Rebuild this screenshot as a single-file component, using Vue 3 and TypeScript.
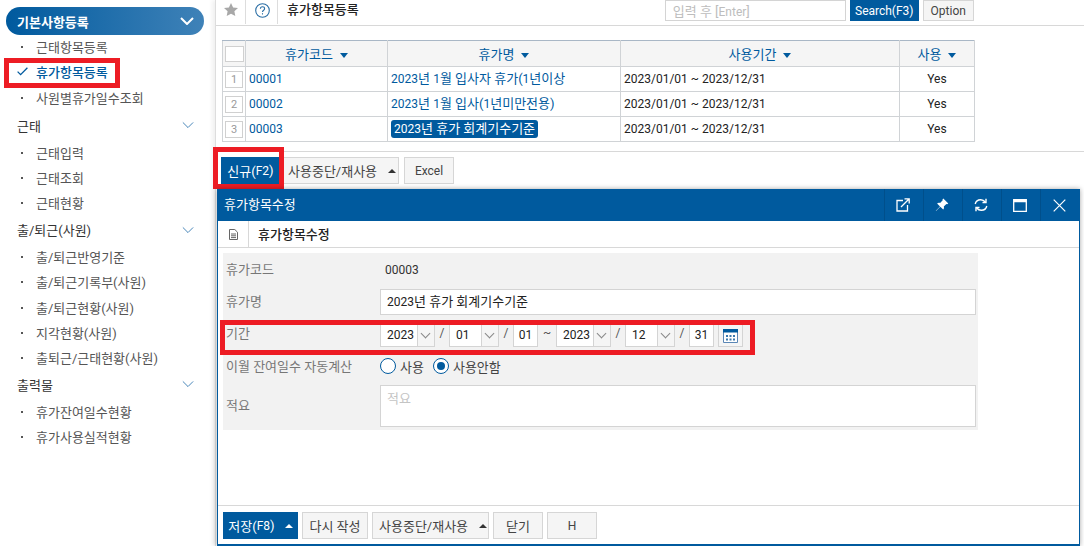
<script setup lang="ts">
import { h } from 'vue'

interface MenuGroup {
  title: string
  active?: boolean
  items: string[]
}

const menu: MenuGroup[] = [
  { title: '기본사항등록', active: true, items: ['근태항목등록', '휴가항목등록', '사원별휴가일수조회'] },
  { title: '근태', items: ['근태입력', '근태조회', '근태현황'] },
  { title: '출/퇴근(사원)', items: ['출/퇴근반영기준', '출/퇴근기록부(사원)', '출/퇴근현황(사원)', '지각현황(사원)', '출퇴근/근태현황(사원)'] },
  { title: '출력물', items: ['휴가잔여일수현황', '휴가사용실적현황'] },
]

const columns = ['휴가코드', '휴가명', '사용기간', '사용']

const rows = [
  { no: 1, code: '00001', name: '2023년 1월 입사자 휴가(1년이상' },
  { no: 2, code: '00002', name: '2023년 1월 입사(1년미만전용)' },
  { no: 3, code: '00003', name: '2023년 휴가 회계기수기준', selected: true },
]

// hangul sits at 13px, digits and latin look right a size smaller
const Txt = (props: { text: string }) =>
  props.text
    .split(/([0-9A-Za-z]+)/)
    .map((part, i) => (i % 2 ? h('span', { class: 'lat' }, part) : part))
</script>

<template>
  <div class="page">
    <aside class="sidebar">
      <section v-for="group in menu" :key="group.title">
        <div class="group-title" :class="{ active: group.active }">
          <Txt :text="group.title" />
          <svg :width="group.active ? 14 : 12" height="8" viewBox="0 0 14 8" fill="none" stroke="currentColor" :stroke-width="group.active ? 2 : 1.1">
            <path d="M1 1l6 6 6-6" />
          </svg>
        </div>
        <div
          v-for="item in group.items"
          :key="item"
          class="menu-item"
          :class="{ current: item === '휴가항목등록' }"
        >
          <svg v-if="item === '휴가항목등록'" class="check" width="11" height="9" viewBox="0 0 11 9" fill="none" stroke="#005a9e" stroke-width="1.3">
            <path d="M.6 4.6l3 3L10.4.8" />
          </svg>
          <i v-else class="dot" />
          <span>{{ item }}</span>
        </div>
      </section>
    </aside>

    <main class="main">
      <header class="topbar">
        <div class="top-cell star">
          <svg width="14" height="13" viewBox="0 0 14 13"><path fill="#a8a8a8" d="M7 0l2.1 4.4 4.9.6-3.6 3.3.9 4.7L7 10.700 2.700 13l.9-4.700L0 5l4.900-.6z" /></svg>
        </div>
        <div class="top-cell help">
          <svg width="15" height="15" viewBox="0 0 15 15" fill="none" stroke="#2a6ea5" stroke-width="1.1">
            <circle cx="7.500" cy="7.500" r="6.800" />
            <path d="M5.400 5.800c0-1.300 1-2 2.100-2s2.100.7 2.100 1.900c0 1.600-2.100 1.500-2.100 3.300" />
            <path d="M7.500 10.200v1.300" />
          </svg>
        </div>
        <strong class="page-title">휴가항목등록</strong>
        <div class="search">
          <div class="search-input"><Txt text="입력 후 [Enter]" /></div>
          <button class="btn primary search-btn lat">Search(F3)</button>
          <button class="btn option-btn lat">Option</button>
        </div>
      </header>

      <div class="table-wrap">
        <table class="grid">
          <colgroup>
            <col style="width: 23px" />
            <col style="width: 142px" />
            <col style="width: 233px" />
            <col style="width: 279px" />
            <col style="width: 75px" />
          </colgroup>
          <thead>
            <tr>
              <th class="no-cell"><span class="no-box" /></th>
              <th v-for="col in columns" :key="col">{{ col }}<i class="sort" /></th>
            </tr>
          </thead>
          <tbody>
            <tr v-for="row in rows" :key="row.no">
              <td class="no-cell"><span class="no-box">{{ row.no }}</span></td>
              <td class="link lat">{{ row.code }}</td>
              <td class="link"><span class="name" :class="{ selected: row.selected }"><Txt :text="row.name" /></span></td>
              <td class="lat">2023/01/01 ~ 2023/12/31</td>
              <td class="center lat">Yes</td>
            </tr>
          </tbody>
        </table>
      </div>

      <div class="list-actions">
        <button class="btn primary new-btn"><Txt text="신규(F2)" /></button>
        <button class="btn plain-drop">사용중단/재사용<i class="up" /></button>
        <button class="btn excel-btn lat">Excel</button>
      </div>
    </main>

    <span class="mark mark-menu" />
    <span class="mark mark-new" />

    <section class="dialog">
      <header class="dialog-head">
        <span class="dialog-title">휴가항목수정</span>
        <div class="dialog-tools">
          <button>
            <svg width="14" height="14" viewBox="0 0 14 14" fill="none" stroke="#fff" stroke-width="1.300">
              <path d="M7 2.500H1v10.500h10.500V7" />
              <path d="M5 9l8-8M8.500 .8h4.700v4.700" />
            </svg>
          </button>
          <button>
            <svg width="14" height="14" viewBox="0 0 14 14" fill="#fff">
              <path d="M8.300 .6l5 5-1.200.7-.7-.3-2.600 2.600c.4 1.300.1 2.300-.6 3L5.300 8.700 1 13 .8 12.800l4.200-4.400L2.100 5.500c.7-.7 1.700-1 3-.6l2.600-2.600-.2-.7z" />
            </svg>
          </button>
          <button>
            <svg width="14" height="14" viewBox="0 0 14 14" fill="none" stroke="#fff" stroke-width="1.400">
              <path d="M1.200 6C1.800 3.400 4 1.700 6.700 1.700c1.900 0 3.500.9 4.600 2.300" />
              <path d="M12.800 8c-.6 2.600-2.800 4.300-5.500 4.300-1.900 0-3.500-.9-4.600-2.300" />
              <path d="M12 .8v3.700H8.500M2 13.200V9.500h3.500" />
            </svg>
          </button>
          <button>
            <svg width="14" height="13" viewBox="0 0 14 13" fill="none" stroke="#fff">
              <path d="M.7.700h12.600v11.600H.7z" stroke-width="1.300" />
              <path d="M.7 2h12.600" stroke-width="2.500" />
            </svg>
          </button>
          <button>
            <svg width="13" height="13" viewBox="0 0 13 13" fill="none" stroke="#fff" stroke-width="1.200">
              <path d="M.7.700l11.600 11.600M12.300.7L.7 12.300" />
            </svg>
          </button>
        </div>
      </header>

      <div class="dialog-sub">
        <div class="sub-icon">
          <svg width="9" height="11" viewBox="0 0 9 11" fill="none" stroke="#666">
            <path d="M.5.500h5.300l2.700 2.700v7.300h-8z" />
            <path d="M2 5h5M2 6.800h5M2 8.600h5" />
          </svg>
        </div>
        <strong>휴가항목수정</strong>
      </div>

      <div class="dialog-body">
        <div class="form">
          <div class="form-row code-row">
            <label>휴가코드</label>
            <span class="value lat">00003</span>
          </div>
          <div class="form-row name-row">
            <label>휴가명</label>
            <div class="field wide"><Txt text="2023년 휴가 회계기수기준" /></div>
          </div>
          <div class="form-row date-row">
            <label>기간</label>
            <div class="date-line lat">
              <div class="combo y"><span>2023</span><i><b /></i></div>
              <em>/</em>
              <div class="combo m"><span>01</span><i><b /></i></div>
              <em>/</em>
              <div class="field day">01</div>
              <em class="tilde">~</em>
              <div class="combo y"><span>2023</span><i><b /></i></div>
              <em>/</em>
              <div class="combo m"><span>12</span><i><b /></i></div>
              <em>/</em>
              <div class="field day">31</div>
              <div class="cal">
                <svg width="15" height="14" viewBox="0 0 15 14">
                  <path fill="#fff" stroke="#5a86b5" d="M.5.500h14v13H.5z" />
                  <path fill="#005a9e" d="M0 0h15v3.500H0z" />
                  <path fill="#3a78ad" d="M3 6h2v2H3zM6.500 6h2v2h-2zM10 6h2v2h-2zM3 9.500h2v2H3zM6.500 9.500h2v2h-2zM10 9.500h2v2h-2z" />
                </svg>
              </div>
            </div>
          </div>
          <div class="form-row radio-row">
            <label>이월 잔여일수 자동계산</label>
            <div class="radios">
              <span class="radio" /><span class="radio-label first">사용</span>
              <span class="radio on" /><span class="radio-label">사용안함</span>
            </div>
          </div>
          <div class="form-row memo-row">
            <label>적요</label>
            <div class="field memo">적요</div>
          </div>
        </div>
      </div>

      <footer class="dialog-foot">
        <div class="split">
          <button class="btn primary save"><Txt text="저장(F8)" /></button>
          <button class="btn primary save-drop"><i class="up white" /></button>
        </div>
        <button class="btn again">다시 작성</button>
        <button class="btn stop">사용중단/재사용<i class="up" /></button>
        <button class="btn close">닫기</button>
        <button class="btn close lat">H</button>
      </footer>

      <span class="mark mark-date" />
    </section>
  </div>
</template>

<style scoped>
.page {
  position: relative;
  display: flex;
  width: 1084px;
  height: 546px;
  overflow: hidden;
  background: #fff;
  color: #222;
  font-family: Roboto, "Noto Sans CJK KR", sans-serif;
  font-size: 13px;
}

.sidebar {
  flex: none;
  width: 213px;
  padding-top: 7px;
  box-sizing: border-box;
  background: #fff;
}

.sidebar section:first-child {
  margin-bottom: 2px;
}

.group-title {
  display: flex;
  align-items: center;
  justify-content: space-between;
  height: 27px;
  margin: 0.5px 9px 1px 6px;
  padding: 0 10px 0 11px;
  color: #333;
}

.group-title svg {
  color: #3f7fb5;
}

.group-title.active {
  height: 28px;
  margin-top: 0;
  margin-bottom: -1px;
  border-radius: 14px;
  background: linear-gradient(90deg, #005a9e, #3f82b8);
  color: #fff;
  font-weight: 700;
}

.group-title.active svg {
  color: #fff;
}

.menu-item {
  position: relative;
  display: flex;
  align-items: center;
  height: 25.25px;
  padding-left: 36px;
  color: #555;
}

.menu-item.current {
  color: #005a9e;
  font-weight: 500;
}

.dot {
  position: absolute;
  left: 21px;
  top: 12px;
  width: 2px;
  height: 2px;
  background: #555;
}

.check {
  position: absolute;
  left: 17px;
  top: 8px;
}

.main {
  flex: 1;
  margin-left: 2px;
  border-left: 1px solid #ddd;
  box-shadow: -3px 0 4px rgba(0, 0, 0, 0.06);
  min-width: 0;
}

.topbar {
  display: flex;
  align-items: stretch;
  height: 25px;
  border-bottom: 1px solid #d8d8d8;
}

.top-cell {
  display: flex;
  align-items: center;
  justify-content: center;
  height: 24px;
  border-right: 1px solid #ddd;
}

.star {
  width: 30px;
  padding-bottom: 5px;
  box-sizing: border-box;
}

.help {
  width: 32px;
  padding: 0 0 3px 1px;
  box-sizing: border-box;
}

.page-title {
  margin-left: 9px;
  line-height: 20px;
  color: #222;
  font-weight: 500;
}

.search {
  display: flex;
  gap: 4px;
  height: 21px;
  margin-left: 306px;
}

.search-input {
  width: 181px;
  box-sizing: border-box;
  height: 21px;
  padding-left: 7px;
  border: 1px solid #d4d4d4;
  color: #bdbdbd;
  line-height: 21px;
}

.btn {
  display: inline-flex;
  align-items: center;
  justify-content: center;
  box-sizing: border-box;
  height: 27px;
  padding: 0;
  border: 1px solid #d6d6d6;
  background: #f5f5f5;
  color: #444;
  font-family: inherit;
  font-size: 13px;
  white-space: nowrap;
}

.btn.lat {
  font-size: 12px;
}

.btn.primary {
  border-color: #005a9e;
  background: #005a9e;
  color: #fff;
}

.search-btn {
  width: 69px;
  height: 21px;
}

.option-btn {
  width: 51px;
  height: 21px;
}

.table-wrap {
  padding: 14px 0 0 6px;
  height: 126px;
  box-sizing: border-box;
  border-bottom: 1px solid #d8d8d8;
}

.grid {
  width: 752px;
  table-layout: fixed;
  border-collapse: collapse;
}

.grid th,
.grid td {
  height: 24px;
  padding: 0;
  border: 1px solid #d0d3d6;
  font-weight: 400;
  overflow: hidden;
  white-space: nowrap;
}

.grid th {
  height: 25px;
  border-top-color: #a9b7c6;
  background: #f5f5f5;
  color: #005a9e;
  text-align: center;
}

.grid td {
  padding-left: 3px;
}

.grid td.center {
  padding: 0;
  text-align: center;
}

.grid td.no-cell {
  padding: 0;
}

.no-cell {
  text-align: center;
}

.no-box {
  display: inline-block;
  width: 18px;
  height: 17px;
  box-sizing: border-box;
  border: 1px solid #d0d0d0;
  background: #fff;
  color: #999;
  font-size: 11px;
  line-height: 15px;
  vertical-align: middle;
}

th .no-box {
  width: 19px;
  height: 16px;
}

.link {
  color: #005a9e;
}

.name {
  display: block;
  width: fit-content;
  line-height: 17px;
}

.selected {
  padding: 0 3px;
  border-radius: 3px;
  background: #005a9e;
  color: #fff;
}

.sort {
  display: inline-block;
  margin-left: 7px;
  border-top: 5px solid #005a9e;
  border-left: 4px solid transparent;
  border-right: 4px solid transparent;
  vertical-align: 1px;
}

.list-actions {
  display: flex;
  padding: 5px 0 0 5px;
}

.new-btn {
  width: 59px;
}

.plain-drop {
  justify-content: flex-start;
  width: 119px;
  padding-left: 8px;
  border-left: 0;
  margin-right: 5px;
}

.excel-btn {
  width: 50px;
}

.up {
  display: inline-block;
  margin-left: 11px;
  border-bottom: 4px solid #333;
  border-left: 4px solid transparent;
  border-right: 4px solid transparent;
}

.up.white {
  margin: 0;
  border-bottom-color: #fff;
}

/* red callouts drawn over the screen */
.mark {
  position: absolute;
  box-sizing: border-box;
  border: 5px solid #ed1c24;
  pointer-events: none;
}

.mark-menu {
  left: 4px;
  top: 58px;
  width: 116px;
  height: 30px;
}

.mark-new {
  left: 213px;
  top: 147px;
  width: 71px;
  height: 42px;
}

.mark-date {
  left: 2px;
  top: 131px;
  width: 535px;
  height: 35px;
}

.dialog {
  position: absolute;
  left: 217px;
  top: 189px;
  display: flex;
  flex-direction: column;
  width: 863px;
  height: 357px;
  box-sizing: border-box;
  border: solid #005a9e;
  border-width: 0 1px 2px;
  background: #fff;
  box-shadow: 0 0 5px rgba(0, 0, 0, 0.35);
}

.dialog-head {
  display: flex;
  align-items: stretch;
  justify-content: space-between;
  flex: none;
  height: 32px;
  background: #005a9e;
  color: #fff;
}

.dialog-title {
  padding-left: 6px;
  line-height: 31px;
}

.dialog-tools {
  display: flex;
}

.dialog-tools button {
  display: flex;
  align-items: center;
  justify-content: center;
  width: 39px;
  padding: 0 2px 0 0;
  border: 0;
  border-left: 1px solid #004f8b;
  background: none;
}

.dialog-sub {
  display: flex;
  align-items: stretch;
  flex: none;
  height: 27px;
  box-sizing: border-box;
  border-bottom: 1px solid #d8d8d8;
}

.sub-icon {
  display: flex;
  align-items: center;
  justify-content: center;
  width: 30px;
  border-right: 1px solid #d8d8d8;
}

.dialog-sub strong {
  margin-left: 9px;
  line-height: 28px;
  font-weight: 500;
}

.dialog-body {
  flex: 1;
  padding: 5px 0 0 5px;
  border-bottom: 1px solid #d8d8d8;
}

.form {
  width: 755px;
  height: 177px;
  background: #f2f2f2;
}

.form-row {
  display: flex;
  align-items: center;
}

.form-row label {
  flex: none;
  width: 157px;
  padding-left: 3px;
  box-sizing: border-box;
  color: #777;
}

.code-row {
  height: 33px;
}

.code-row label {
  margin-bottom: 3px;
}

.value {
  margin-left: 5px;
  color: #333;
}

.name-row {
  height: 32px;
}

.name-row label {
  margin-bottom: 3px;
}

.field {
  box-sizing: border-box;
  border: 1px solid #d4d4d4;
  background: #fff;
  color: #222;
}

.wide {
  width: 596px;
  height: 26px;
  padding-left: 6px;
  line-height: 24px;
}

.date-row {
  height: 33px;
  padding-top: 2px;
  box-sizing: border-box;
}

.date-row label {
  margin-bottom: 7px;
}

.date-line {
  display: flex;
  align-items: center;
  height: 23px;
}

.date-line em {
  width: 14px;
  margin-bottom: 5px;
  color: #555;
  font-style: normal;
  text-align: center;
}

.date-line em.tilde {
  width: 18px;
}

.combo {
  display: flex;
  box-sizing: border-box;
  height: 23px;
  border: 1px solid #d4d4d4;
  background: #fff;
}

.combo span {
  flex: 1;
  padding-left: 6px;
  line-height: 21px;
}

.combo i {
  position: relative;
  flex: none;
  width: 16px;
  border-left: 1px solid #d4d4d4;
  background: #f5f5f5;
}

.combo b {
  position: absolute;
  left: 4px;
  top: 5px;
  width: 6px;
  height: 6px;
  border: solid #888;
  border-width: 0 1px 1px 0;
  transform: rotate(45deg);
}

.combo.y {
  width: 55px;
}

.combo.m {
  width: 50px;
}

.day {
  width: 25px;
  height: 23px;
  line-height: 21px;
  text-align: center;
}

.cal {
  display: flex;
  align-items: center;
  justify-content: center;
  width: 25px;
  height: 23px;
  margin-left: 4px;
  box-sizing: border-box;
  border: 1px solid #d4d4d4;
  background: #f5f5f5;
}

.radio-row {
  height: 32px;
  padding-bottom: 2px;
  box-sizing: border-box;
}

.radio-row label {
  margin-bottom: 2px;
}

.radios {
  display: flex;
  align-items: center;
}

.radio {
  position: relative;
  width: 16px;
  height: 16px;
  box-sizing: border-box;
  border: 1px solid #005a9e;
  border-radius: 50%;
  background: #fff;
}

.radio.on::after {
  content: "";
  position: absolute;
  left: 3px;
  top: 3px;
  width: 8px;
  height: 8px;
  border-radius: 50%;
  background: #005a9e;
}

.radio-label {
  margin-left: 4px;
  color: #444;
}

.radio-label.first {
  margin-right: 9px;
}

.memo-row {
  align-items: stretch;
  padding-top: 2px;
}

.memo-row label {
  padding-top: 10px;
}

.memo {
  width: 596px;
  height: 42px;
  padding: 2px 0 0 6px;
  color: #c4c4c4;
}

.dialog-foot {
  display: flex;
  flex: none;
  gap: 4px;
  height: 38px;
  box-sizing: border-box;
  padding: 6px 0 0 5px;
}

.split {
  display: flex;
}

.save {
  width: 57px;
  border-right-color: #004f8b;
}

.save-drop {
  width: 18px;
}

.again {
  width: 66px;
}

.stop {
  justify-content: flex-start;
  width: 117px;
  padding-left: 6px;
}

.close {
  width: 50px;
}
</style>

<style>
html,
body {
  margin: 0;
  overflow: hidden;
}

.lat {
  font-size: 12px;
}
</style>
